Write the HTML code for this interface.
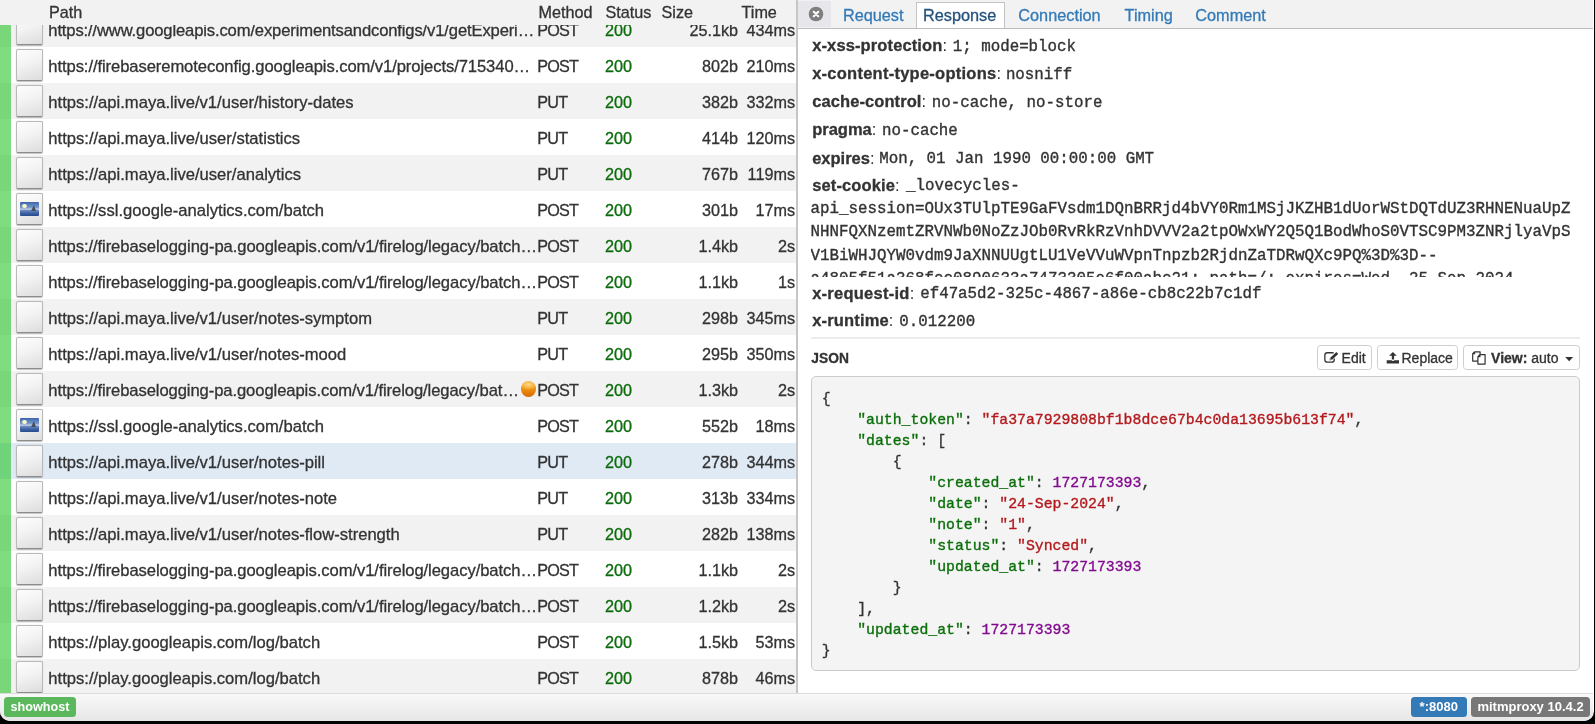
<!DOCTYPE html>
<html><head><meta charset="utf-8"><style>
*{margin:0;padding:0;box-sizing:border-box}
html,body{width:1595px;height:724px;overflow:hidden;background:#000}
body{font-family:"Liberation Sans",sans-serif;color:#333}
#win{position:absolute;left:0;top:0;width:1593.8px;height:721px;background:#fff;overflow:hidden;border-radius:0 0 10px 10px;will-change:transform}
#left{position:absolute;left:0;top:0;width:796px;height:693px;overflow:hidden;background:#fff}
#thead{position:absolute;left:0;top:0;width:796px;height:25px;background:#f2f2f2}
.h{position:absolute;top:0;line-height:25px;font-size:16.2px;color:#333;white-space:nowrap}
.row{position:absolute;left:0;width:796px;height:36px;background:#fff;white-space:nowrap;font-size:16.2px;line-height:36px}
.row.odd{background:#f2f2f2}
.row.sel{background:#e0eaf5}
.tls{position:absolute;left:0;top:0;width:11.3px;height:36px;background:rgba(0,185,0,0.5)}
.ic{position:absolute;left:16.2px;top:2.3px;width:26.6px;height:31.2px;border:1px solid #b9b9b9;border-bottom:1.9px solid #8c8c8c;border-radius:2px;background:linear-gradient(160deg,#fdfdfd 0%,#f3f3f3 45%,#dcdcdc 100%);box-shadow:0 0.5px 1px rgba(0,0,0,0.25)}
.pic{position:absolute;left:2.7px;top:7.4px;width:18.8px;height:14.1px;background:linear-gradient(180deg,#3a66ad 0%,#7b9bcd 40%,#c5d3e6 52%,#6f8fc2 58%,#3f62a3 80%,#254a8c 100%);border-radius:1px}
.sun{position:absolute;left:2.3px;top:1.9px;width:4.4px;height:4.4px;border-radius:50%;background:radial-gradient(circle,#ffffe8 0%,#eef3b8 60%,rgba(230,240,180,0.3) 100%)}
.hill{position:absolute;left:10.8px;top:3.4px;width:0;height:0;border-left:3px solid transparent;border-right:2.8px solid transparent;border-bottom:6px solid #46505d;filter:blur(0.3px)}
.path{position:absolute;left:48.3px;top:1.5px;font-size:16.6px}
.meth{position:absolute;left:537.3px;top:0.6px;letter-spacing:-0.8px}
.st{position:absolute;left:605px;top:0.6px;color:#0c6c0c}
.sz{position:absolute;right:58px;top:0.6px}
.tm{position:absolute;right:1px;top:0.6px}
.dot{position:absolute;left:520.9px;top:10.4px;width:15.6px;height:15.6px;border-radius:50%;background:radial-gradient(ellipse 60% 35% at 50% 22%,rgba(255,225,150,0.9) 0%,rgba(255,200,100,0) 100%),linear-gradient(180deg,#f7a11d 0%,#f29412 45%,#de7405 85%,#d36803 100%)}
#split{position:absolute;left:796px;top:0;width:1.6px;height:693px;background:#c6c6c6}
#right{position:absolute;left:797.6px;top:0;width:795.2px;height:693px;background:#fff;overflow:hidden}
#tabs{position:absolute;left:0;top:0;width:100%;height:28.7px;background:#f2f2f2;border-bottom:1.8px solid #bcbcbc}
#close{position:absolute;left:0;top:1px;width:33.5px;height:25.6px;background:#e7e7eb}
#close svg{position:absolute;left:10.5px;top:5.2px}
.tab{position:absolute;top:1.1px;line-height:28px;font-size:16.3px;color:#337ab7;white-space:nowrap;z-index:2}
.tab.act{color:#23527c}
#acttab{position:absolute;left:118.2px;top:2px;width:89.2px;height:25.5px;background:#fff;border:1.2px solid #c4c4c4;border-bottom:none;z-index:1}
.kv{position:absolute;left:14.6px;height:28px;line-height:28px;white-space:nowrap;font-size:16.5px}
.kv b{font-weight:bold;font-size:16.5px;color:#333}
.kv i{font-style:normal;display:inline-block;width:12.3px}
.v{position:absolute;margin-top:1.5px;height:28px;line-height:28px;white-space:pre;font-family:"Liberation Mono",monospace;font-size:15.8px}
#cookie{position:absolute;left:13px;top:198.2px;width:780px;height:78.5px;overflow:hidden;font-family:"Liberation Mono",monospace;font-size:15.83px;line-height:23.3px;white-space:pre}
#hr{position:absolute;left:13.3px;top:337px;width:769px;height:1.5px;background:#ececec}
#jsontitle{position:absolute;left:13.7px;top:348.8px;line-height:20px;font-size:13.8px;font-weight:bold;color:#333}
.btn{position:absolute;top:345.3px;height:24.3px;border:1.1px solid #cfcfcf;border-radius:3.5px;background:#fff}
.bi{position:absolute;top:4.5px}
.bt{position:absolute;top:0.5px;line-height:22px;font-size:14px;white-space:nowrap;color:#333}
.caret{position:absolute;right:6px;top:9.5px;width:0;height:0;border-left:4.5px solid transparent;border-right:4.5px solid transparent;border-top:5px solid #333}
#pre{position:absolute;left:13.6px;top:376.3px;width:768.7px;height:294.5px;background:#f4f4f4;border:1.2px solid #cbcbcb;border-radius:5px;padding:12px 0 0 9.5px;font-family:"Liberation Mono",monospace;font-size:14.8px;line-height:21px;white-space:pre;color:#333}
#pre .k{color:#0a6f0a}
#pre .s{color:#b3191d}
#pre .n{color:#820a8f}
#footer{position:absolute;left:0;top:692.5px;width:1593px;height:28.5px;background:linear-gradient(180deg,#f9f9f9,#e6e6e6);border-top:1px solid #dcdcdc}
.lbl{position:absolute;top:3.6px;height:20px;line-height:20px;border-radius:3.5px;color:#fff;font-weight:bold;font-size:13px;text-align:center;white-space:nowrap}

#ov{position:absolute;left:0;top:0;z-index:10;pointer-events:none}
#pre,.v,#cookie{-webkit-text-stroke:0.35px currentColor}
.kv b,#jsontitle,.bt b{-webkit-text-stroke:0.3px currentColor}
.row span,.h,.tab,.bt{-webkit-text-stroke:0.3px currentColor}

</style></head><body>
<div id="win">
 <div id="left">
  <div class="row odd" style="top:11.1px"><div class="tls"></div><div class="ic"></div><span class="path" style="letter-spacing:-0.138px">https://www.googleapis.com/experimentsandconfigs/v1/getExperi…</span><span class="meth">POST</span><span class="st">200</span><span class="sz">25.1kb</span><span class="tm">434ms</span></div><div class="row" style="top:47.1px"><div class="tls"></div><div class="ic"></div><span class="path" style="letter-spacing:-0.084px">https://firebaseremoteconfig.googleapis.com/v1/projects/715340…</span><span class="meth">POST</span><span class="st">200</span><span class="sz">802b</span><span class="tm">210ms</span></div><div class="row odd" style="top:83.1px"><div class="tls"></div><div class="ic"></div><span class="path" style="letter-spacing:0.000px">https://api.maya.live/v1/user/history-dates</span><span class="meth">PUT</span><span class="st">200</span><span class="sz">382b</span><span class="tm">332ms</span></div><div class="row" style="top:119.1px"><div class="tls"></div><div class="ic"></div><span class="path" style="letter-spacing:0.000px">https://api.maya.live/user/statistics</span><span class="meth">PUT</span><span class="st">200</span><span class="sz">414b</span><span class="tm">120ms</span></div><div class="row odd" style="top:155.1px"><div class="tls"></div><div class="ic"></div><span class="path" style="letter-spacing:0.000px">https://api.maya.live/user/analytics</span><span class="meth">PUT</span><span class="st">200</span><span class="sz">767b</span><span class="tm">119ms</span></div><div class="row" style="top:191.1px"><div class="tls"></div><div class="ic"><div class="pic"><div class="sun"></div><div class="hill"></div></div></div><span class="path" style="letter-spacing:0.000px">https://ssl.google-analytics.com/batch</span><span class="meth">POST</span><span class="st">200</span><span class="sz">301b</span><span class="tm">17ms</span></div><div class="row odd" style="top:227.1px"><div class="tls"></div><div class="ic"></div><span class="path" style="letter-spacing:-0.074px">https://firebaselogging-pa.googleapis.com/v1/firelog/legacy/batch…</span><span class="meth">POST</span><span class="st">200</span><span class="sz">1.4kb</span><span class="tm">2s</span></div><div class="row" style="top:263.1px"><div class="tls"></div><div class="ic"></div><span class="path" style="letter-spacing:-0.074px">https://firebaselogging-pa.googleapis.com/v1/firelog/legacy/batch…</span><span class="meth">POST</span><span class="st">200</span><span class="sz">1.1kb</span><span class="tm">1s</span></div><div class="row odd" style="top:299.1px"><div class="tls"></div><div class="ic"></div><span class="path" style="letter-spacing:0.000px">https://api.maya.live/v1/user/notes-symptom</span><span class="meth">PUT</span><span class="st">200</span><span class="sz">298b</span><span class="tm">345ms</span></div><div class="row" style="top:335.1px"><div class="tls"></div><div class="ic"></div><span class="path" style="letter-spacing:0.000px">https://api.maya.live/v1/user/notes-mood</span><span class="meth">PUT</span><span class="st">200</span><span class="sz">295b</span><span class="tm">350ms</span></div><div class="row odd" style="top:371.1px"><div class="tls"></div><div class="ic"></div><span class="path" style="letter-spacing:-0.084px">https://firebaselogging-pa.googleapis.com/v1/firelog/legacy/bat…</span><div class="dot"></div><span class="meth">POST</span><span class="st">200</span><span class="sz">1.3kb</span><span class="tm">2s</span></div><div class="row" style="top:407.1px"><div class="tls"></div><div class="ic"><div class="pic"><div class="sun"></div><div class="hill"></div></div></div><span class="path" style="letter-spacing:0.000px">https://ssl.google-analytics.com/batch</span><span class="meth">POST</span><span class="st">200</span><span class="sz">552b</span><span class="tm">18ms</span></div><div class="row odd sel" style="top:443.1px"><div class="tls"></div><div class="ic"></div><span class="path" style="letter-spacing:0.000px">https://api.maya.live/v1/user/notes-pill</span><span class="meth">PUT</span><span class="st">200</span><span class="sz">278b</span><span class="tm">344ms</span></div><div class="row" style="top:479.1px"><div class="tls"></div><div class="ic"></div><span class="path" style="letter-spacing:0.000px">https://api.maya.live/v1/user/notes-note</span><span class="meth">PUT</span><span class="st">200</span><span class="sz">313b</span><span class="tm">334ms</span></div><div class="row odd" style="top:515.1px"><div class="tls"></div><div class="ic"></div><span class="path" style="letter-spacing:0.000px">https://api.maya.live/v1/user/notes-flow-strength</span><span class="meth">PUT</span><span class="st">200</span><span class="sz">282b</span><span class="tm">138ms</span></div><div class="row" style="top:551.1px"><div class="tls"></div><div class="ic"></div><span class="path" style="letter-spacing:-0.074px">https://firebaselogging-pa.googleapis.com/v1/firelog/legacy/batch…</span><span class="meth">POST</span><span class="st">200</span><span class="sz">1.1kb</span><span class="tm">2s</span></div><div class="row odd" style="top:587.1px"><div class="tls"></div><div class="ic"></div><span class="path" style="letter-spacing:-0.074px">https://firebaselogging-pa.googleapis.com/v1/firelog/legacy/batch…</span><span class="meth">POST</span><span class="st">200</span><span class="sz">1.2kb</span><span class="tm">2s</span></div><div class="row" style="top:623.1px"><div class="tls"></div><div class="ic"></div><span class="path" style="letter-spacing:0.000px">https://play.googleapis.com/log/batch</span><span class="meth">POST</span><span class="st">200</span><span class="sz">1.5kb</span><span class="tm">53ms</span></div><div class="row odd" style="top:659.1px"><div class="tls"></div><div class="ic"></div><span class="path" style="letter-spacing:0.000px">https://play.googleapis.com/log/batch</span><span class="meth">POST</span><span class="st">200</span><span class="sz">878b</span><span class="tm">46ms</span></div>
  <div id="thead"><span class="h" style="left:49px">Path</span><span class="h" style="left:538.5px">Method</span><span class="h" style="left:605.5px">Status</span><span class="h" style="left:661.5px">Size</span><span class="h" style="left:741.5px">Time</span></div>
 </div>
 <div id="split"></div>
 <div id="right">
  <div id="tabs">
   <div id="close"><svg width="16" height="16" viewBox="0 0 16 16"><circle cx="8" cy="8" r="7.3" fill="#7f7f7f"/><path d="M5.75 5.75 L10.25 10.25 M10.25 5.75 L5.75 10.25" stroke="#fff" stroke-width="2.1" stroke-linecap="round"/></svg></div>
   <span class="tab" style="left:45.3px">Request</span>
   <div id="acttab"></div>
   <span class="tab act" style="left:125.4px">Response</span>
   <span class="tab" style="left:220.7px">Connection</span>
   <span class="tab" style="left:327px">Timing</span>
   <span class="tab" style="left:397.7px">Comment</span>
  </div>
  <div class="kv" style="top:31.30px"><b style="letter-spacing:0.12px">x-xss-protection</b><i>:</i></div><div class="v" style="top:31.30px;left:155.20px">1; mode=block</div><div class="kv" style="top:59.30px"><b style="letter-spacing:0.25px">x-content-type-options</b><i>:</i></div><div class="v" style="top:59.30px;left:208.30px">nosniff</div><div class="kv" style="top:87.30px"><b style="letter-spacing:0.085px">cache-control</b><i>:</i></div><div class="v" style="top:87.30px;left:134.20px">no-cache, no-store</div><div class="kv" style="top:115.30px"><b style="letter-spacing:0px">pragma</b><i>:</i></div><div class="v" style="top:115.30px;left:84.40px">no-cache</div><div class="kv" style="top:143.60px"><b style="letter-spacing:0px">expires</b><i>:</i></div><div class="v" style="top:143.60px;left:81.60px">Mon, 01 Jan 1990 00:00:00 GMT</div><div class="kv" style="top:170.90px"><b style="letter-spacing:0.12px">set-cookie</b><i>:</i></div><div class="v" style="top:170.90px;left:108.40px">_lovecycles-</div><div class="kv" style="top:278.70px"><b style="letter-spacing:0.25px">x-request-id</b><i>:</i></div><div class="v" style="top:278.70px;left:122.60px">ef47a5d2-325c-4867-a86e-cb8c22b7c1df</div><div class="kv" style="top:306.20px"><b style="letter-spacing:0.16px">x-runtime</b><i>:</i></div><div class="v" style="top:306.20px;left:101.70px">0.012200</div>
  <div id="cookie"><div>api_session=OUx3TUlpTE9GaFVsdm1DQnBRRjd4bVY0Rm1MSjJKZHB1dUorWStDQTdUZ3RHNENuaUpZ</div><div>NHNFQXNzemtZRVNWb0NoZzJOb0RvRkRzVnhDVVV2a2tpOWxWY2Q5Q1BodWhoS0VTSC9PM3ZNRjlyaVpS</div><div>V1BiWHJQYW0vdm9JaXNNUUgtLU1VeVVuWVpnTnpzb2RjdnZaTDRwQXc9PQ%3D%3D--</div><div>a4805f51a368fcc0890633a7473305e6f00abc21; path=/; expires=Wed, 25 Sep 2024</div></div>
  <div id="hr"></div>
  <div id="jsontitle">JSON</div>
  <div class="btn" style="left:519.5px;width:55px"><span class="bt" style="left:23.5px">Edit</span></div>
  <div class="btn" style="left:579.5px;width:81px"><span class="bt" style="left:23.4px">Replace</span></div>
  <div class="btn" style="left:665.5px;width:116.5px"><span class="bt" style="left:27px"><b>View:</b> auto</span></div>
  <div id="pre">{<br>    <span class="k">"auth_token"</span>: <span class="s">"fa37a7929808bf1b8dce67b4c0da13695b613f74"</span>,<br>    <span class="k">"dates"</span>: [<br>        {<br>            <span class="k">"created_at"</span>: <span class="n">1727173393</span>,<br>            <span class="k">"date"</span>: <span class="s">"24-Sep-2024"</span>,<br>            <span class="k">"note"</span>: <span class="s">"1"</span>,<br>            <span class="k">"status"</span>: <span class="s">"Synced"</span>,<br>            <span class="k">"updated_at"</span>: <span class="n">1727173393</span><br>        }<br>    ],<br>    <span class="k">"updated_at"</span>: <span class="n">1727173393</span><br>}</div>
 </div>
<svg id="ov" width="1593" height="721" viewBox="0 0 1593 721">
  <path d="M1333.6 352.75 H1327.3 Q1324.85 352.75 1324.85 355.2 V359.7 Q1324.85 362.15 1327.3 362.15 H1331.8 Q1334.25 362.15 1334.25 359.7 V358.6" fill="none" stroke="#333" stroke-width="1.3"/>
  <line x1="1330.9" y1="358.9" x2="1337.3" y2="352.9" stroke="#333" stroke-width="2.7"/>
  <path d="M1329.3 360.5 L1329.9 357.9 L1331.9 359.9 Z" fill="#888"/>
  <path d="M1392.9 351.9 L1396.8 355.8 H1394.1 V359.6 H1391.8 V355.8 H1389.1 Z" fill="#333"/>
  <path d="M1386.7 360.2 H1391.4 Q1392.95 361.7 1394.5 360.2 H1399 V363.6 H1386.7 Z" fill="#333"/>
  <path d="M1474.6 351.8 H1480.1 V361.1 H1472.7 V353.7 Z M1474.6 351.8 V353.7 H1472.7" fill="#fff" stroke="#333" stroke-width="1.2" stroke-linejoin="round"/>
  <path d="M1479.9 354.7 H1485.1 V364.1 H1477.9 V356.7 Z M1479.9 354.7 V356.7 H1477.9" fill="#fff" stroke="#333" stroke-width="1.2" stroke-linejoin="round"/>
  <path d="M1565.2 357 H1573.1 L1569.15 361.2 Z" fill="#333"/>
</svg>
 <div id="footer">
  <span class="lbl" style="left:4px;width:72px;background:#5cb85c;font-size:12.6px">showhost</span>
  <span class="lbl" style="left:1410.5px;width:56.5px;background:#337ab7">*:8080</span>
  <span class="lbl" style="left:1471px;width:119px;background:#777">mitmproxy 10.4.2</span>
 </div>
</div>
</body></html>
